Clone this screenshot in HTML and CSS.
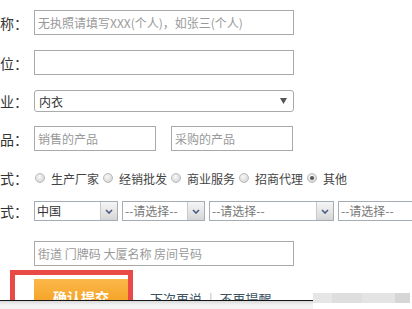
FILE: index.html
```html
<!DOCTYPE html>
<html lang="zh-CN">
<head>
    <meta charset="UTF-8">
    <title>注册信息</title>
    <link rel="stylesheet" href="styles.css">
</head>
<body>
    <div class="page">
        <form class="form">
            <div class="row row-name">
                <span class="lbl">称：</span>
                <input class="field wide" type="text" placeholder="无执照请填写XXX(个人)，如张三(个人)">
            </div>
            <div class="row row-unit">
                <span class="lbl">位：</span>
                <input class="field wide" type="text">
            </div>
            <div class="row row-trade">
                <span class="lbl">业：</span>
                <div class="pick">
                    <span>内衣</span>
                    <svg width="7" height="6" viewBox="0 0 7 6"><path d="M0 0h7L3.5 6z" fill="#555"/></svg>
                </div>
            </div>
            <div class="row row-goods">
                <span class="lbl">品：</span>
                <input class="field half" type="text" placeholder="销售的产品">
                <input class="field half second" type="text" placeholder="采购的产品">
            </div>
            <div class="row row-mode">
                <span class="lbl">式：</span>
                <div class="opts">
                    <span class="opt"><span class="dot"></span>生产厂家</span>
                    <span class="opt"><span class="dot"></span>经销批发</span>
                    <span class="opt"><span class="dot"></span>商业服务</span>
                    <span class="opt"><span class="dot"></span>招商代理</span>
                    <span class="opt"><span class="dot on"></span>其他</span>
                </div>
            </div>
            <div class="row row-area">
                <span class="lbl">式：</span>
                <div class="drop d1"><span class="val dark">中国</span><span class="arr"><svg width="8" height="5" viewBox="0 0 8 5"><path d="M1 1l3 3 3-3" stroke="#4a5d80" stroke-width="1.6" fill="none"/></svg></span></div>
                <div class="drop d2"><span class="val">--请选择--</span><span class="arr"><svg width="8" height="5" viewBox="0 0 8 5"><path d="M1 1l3 3 3-3" stroke="#4a5d80" stroke-width="1.6" fill="none"/></svg></span></div>
                <div class="drop d3"><span class="val">--请选择--</span><span class="arr"><svg width="8" height="5" viewBox="0 0 8 5"><path d="M1 1l3 3 3-3" stroke="#4a5d80" stroke-width="1.6" fill="none"/></svg></span></div>
                <div class="drop d3"><span class="val">--请选择--</span><span class="arr"><svg width="8" height="5" viewBox="0 0 8 5"><path d="M1 1l3 3 3-3" stroke="#4a5d80" stroke-width="1.6" fill="none"/></svg></span></div>
            </div>
            <div class="row row-addr">
                <span class="lbl"></span>
                <input class="field wide" type="text" placeholder="街道 门牌码 大厦名称 房间号码">
            </div>
            <div class="actions">
                <button class="submit" type="button">确认提交</button>
                <div class="later">
                    <a href="#">下次再说</a>
                    <span class="sep">|</span>
                    <a href="#">不再提醒</a>
                </div>
            </div>
        </form>

        <!-- annotation box and the screenshot edge at the bottom -->
        <div class="mark"></div>
        <div class="edge"></div>
        <div class="edge-fill"></div>
        <div class="blur-blocks"></div>
    </div>
</body>
</html>
```

FILE: styles.css
```css
* {
    box-sizing: border-box;
}

body {
    margin: 0;
    background: #fff;
    font-family: "Noto Sans CJK SC", "Noto Sans", sans-serif;
    font-size: 12px;
    color: #333;
    overflow: hidden;
}

.page {
    position: relative;
    width: 412px;
    height: 309px;
    overflow: hidden;
}

.form {
    padding-top: 10px;
}

.row {
    display: flex;
    align-items: center;
}

.lbl {
    flex: 0 0 28px;
    display: flex;
    justify-content: flex-end;
    white-space: nowrap;
    margin-right: 6px;
    font-size: 14px;
    color: #333;
}

.row-name,
.row-unit {
    height: 25px;
    margin-bottom: 15px;
}

.row-trade {
    height: 22px;
    margin-bottom: 14px;
}

.row-goods {
    height: 25px;
    margin-bottom: 14px;
}

.row-mode {
    height: 26px;
    margin-bottom: 10px;
}

.row-area {
    height: 20px;
    margin-bottom: 20px;
}

.row-addr {
    height: 25px;
}

.field {
    height: 25px;
    border: 1px solid #a9a9a9;
    padding: 0 3px;
    font: 12px "Noto Sans CJK SC", sans-serif;
    color: #333;
    background: #fff;
    outline: none;
    flex-shrink: 0;
}

.field::placeholder {
    color: #999;
}

.wide {
    width: 260px;
}

.half {
    width: 122px;
}

.half.second {
    margin-left: 15px;
}

.pick {
    width: 260px;
    height: 22px;
    border: 1px solid #aaa;
    border-radius: 3px;
    display: flex;
    align-items: center;
    justify-content: space-between;
    padding: 0 6px 0 4px;
}

.opts {
    display: flex;
    align-items: center;
    white-space: nowrap;
}

.opt {
    display: flex;
    align-items: center;
    margin-right: 3px;
    color: #444;
}

.dot {
    width: 10px;
    height: 10px;
    margin: 0 6px 0 1px;
    border-radius: 50%;
    border: 1px solid #b9b9b9;
    background: radial-gradient(circle at 40% 35%, #f8f8f8, #cdcdcd);
    display: flex;
    align-items: center;
    justify-content: center;
}

.dot.on::after {
    content: '';
    width: 4px;
    height: 4px;
    border-radius: 50%;
    background: #555;
}

.drop {
    flex-shrink: 0;
    height: 20px;
    display: flex;
    border: 1px solid #a5acb2;
    background: #fff;
    margin-right: 4px;
}

.drop .val {
    flex: 1;
    padding-left: 2px;
    line-height: 18px;
    color: #777;
    white-space: nowrap;
    overflow: hidden;
}

.drop .val.dark {
    color: #333;
}

.drop .arr {
    width: 17px;
    border-left: 1px solid #c9c9c9;
    background: linear-gradient(#f6f6f6, #d6d6d6);
    display: flex;
    align-items: center;
    justify-content: center;
}

.d1 {
    width: 84px;
}

.d2 {
    width: 83px;
}

.d3 {
    width: 125px;
}

.actions {
    display: flex;
    align-items: flex-start;
    padding-left: 34px;
    margin-top: 13px;
}

.submit {
    width: 94px;
    height: 36px;
    border: 0;
    background: linear-gradient(#fbb74a, #f29a14);
    color: #fff;
    font: bold 14px "Noto Sans CJK SC", sans-serif;
    padding: 0;
}

.later {
    margin-left: 22px;
    padding-top: 10px;
    font-size: 13px;
    white-space: nowrap;
}

.later a {
    color: #3b5565;
    text-decoration: none;
}

.later .sep {
    color: #bbb;
    margin: 0 4px;
}

.mark {
    position: absolute;
    left: 10px;
    top: 270px;
    width: 123px;
    height: 60px;
    border: 5px solid #ea4a46;
}

.edge {
    position: absolute;
    left: 0;
    top: 300px;
    width: 313px;
    height: 1px;
    background: #151515;
}

.edge-fill {
    position: absolute;
    left: 0;
    top: 301px;
    width: 313px;
    height: 8px;
    background: linear-gradient(#d8d8d8, #f4f4f4 4px);
}

.blur-blocks {
    position: absolute;
    left: 313px;
    top: 293px;
    width: 97px;
    height: 10px;
    background: linear-gradient(90deg, #e6e6e6 0 20%, #dedede 20% 50%, #e4e4e4 50% 85%, #d6d6d6 85%);
}
```
